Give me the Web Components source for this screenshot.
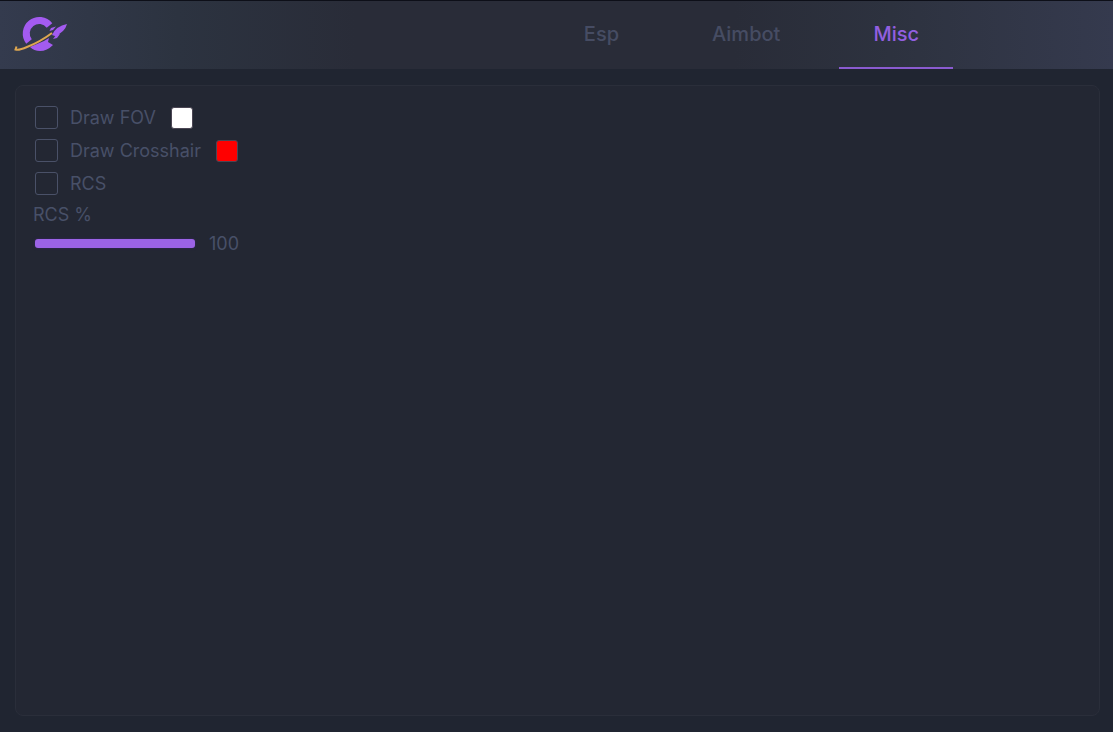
<!DOCTYPE html>
<html lang="en">
<head>
<meta charset="utf-8">
<title>Misc</title>
<style>
  html { height: 100%; }
  body { margin: 0; min-height: 100%; display: flex; background: #202531; color: #485068; font-family: Inter, "Open Sans", sans-serif; }
</style>
</head>
<body>
<app-shell>
  <app-logo slot="logo"></app-logo>
  <nav-tab slot="tabs" href="#esp">Esp</nav-tab>
  <nav-tab slot="tabs" href="#aimbot">Aimbot</nav-tab>
  <nav-tab slot="tabs" href="#misc" active>Misc</nav-tab>
  <option-check label="Draw FOV" color="#ffffff"></option-check>
  <option-check label="Draw Crosshair" color="#ff0000"></option-check>
  <option-check label="RCS"></option-check>
  <option-slider label="RCS %" value="100"></option-slider>
</app-shell>
<script>
class AppShell extends HTMLElement {
  constructor() {
    super();
    this.attachShadow({ mode: "open" }).innerHTML = `
      <style>
        :host { display: flex; flex-direction: column; flex: 1; min-height: 100vh; box-sizing: border-box; border-top: 1px solid #0d0f18; }
        header { display: flex; align-items: center; justify-content: space-between; height: 68px; padding: 0 160px 0 14px; box-sizing: border-box;
          background: linear-gradient(90deg, #343b4e 0%, #2c3340 16%, #292c38 32%, #292c38 66%, #2d323f 80%, #353a4e 100%); }
        nav { display: flex; gap: 25px; height: 100%; }
        main { flex: 1; display: flex; flex-direction: column; align-items: flex-start; margin: 16px 13px 16px 15px; padding: 15px 17px;
          border: 1px solid #2a2e3a; border-radius: 8px; background: #232733; }
      </style>
      <header><slot name="logo"></slot><nav><slot name="tabs"></slot></nav></header>
      <main><slot></slot></main>`;
  }
}
class AppLogo extends HTMLElement {
  constructor() {
    super();
    this.attachShadow({ mode: "open" }).innerHTML = `
      <style>:host { display: block; } svg { display: block; }</style>
      <svg width="56" height="40" viewBox="0 0 56 40" role="img" aria-label="Logo">
        <path d="M35.500 10.500A13 13 0 1 0 15 26.500" fill="none" stroke="#a35bf0" stroke-width="7"/>
        <path d="M16 32L30 26L35 23L34 27L39 30Q33 36 26 36Q20 36 16 32Z" fill="#a35bf0"/>
        <path d="M2.500 31.500L1.500 34.500Q5 35.500 13 32C22 28.500 30 24 38 18" fill="none" stroke="#dda650" stroke-width="2"/>
        <path d="M38 20Q42 11 53 9Q51 17 41 21ZM42 11.500L37 13L35.500 16L39 15ZM46 19L43 23L39 24L42 20Z" fill="#a35bf0"/>
      </svg>`;
  }
}
class NavTab extends HTMLElement {
  connectedCallback() {
    const active = this.hasAttribute("active");
    this.attachShadow({ mode: "open" }).innerHTML = `
      <style>
        :host { display: block; height: 100%; }
        a { display: flex; align-items: center; justify-content: center; height: 100%; padding: 0 34px; box-sizing: border-box;
          border-bottom: 2px solid transparent; font-size: 20px; line-height: 24px; font-weight: 500; color: #464c63; text-decoration: none; }
        a[aria-current] { color: #925fe0; border-bottom-color: #8a5bd0; }
      </style>
      <a href="${this.getAttribute("href")}" ${active ? 'aria-current="page"' : ""}><slot></slot></a>`;
  }
}
class OptionCheck extends HTMLElement {
  connectedCallback() {
    const label = this.getAttribute("label"), color = this.getAttribute("color");
    this.attachShadow({ mode: "open" }).innerHTML = `
      <style>
        :host { display: flex; align-items: center; height: 33px; padding-left: 2px; }
        label { display: flex; align-items: center; gap: 12px; font-size: 18px; line-height: 24px; }
        input { appearance: none; width: 23px; height: 23px; margin: 0; box-sizing: border-box; border: 1px solid #4a5168; border-radius: 3px; }
        input:checked { background: #925fe0; }
        button { width: 22px; height: 22px; margin: 0 0 0 15px; padding: 0; border: 1px solid #4b4654; border-radius: 3px; background: ${color || "none"}; }
      </style>
      <label><input type="checkbox">${label}</label>
      ${color ? `<button type="button" aria-label="${label} color"></button>` : ""}`;
  }
}
class OptionSlider extends HTMLElement {
  connectedCallback() {
    const label = this.getAttribute("label"), value = this.getAttribute("value");
    this.attachShadow({ mode: "open" }).innerHTML = `
      <style>
        :host { display: block; font-size: 18px; line-height: 29px; }
        label { display: block; }
        div { display: flex; align-items: center; gap: 14px; padding-left: 2px; }
        input { appearance: none; width: 160px; height: 9px; margin: 0; border-radius: 3px;
          background: linear-gradient(#9b63e6, #9b63e6) 0 / ${value}% 100% no-repeat #2c3140; box-shadow: 0 0 3px #34275c; }
        input::-webkit-slider-thumb { appearance: none; width: 1px; height: 9px; background: transparent; }
      </style>
      <label for="range">${label}</label>
      <div><input id="range" type="range" min="0" max="100" value="${value}"><output for="range">${value}</output></div>`;
  }
}
customElements.define("app-shell", AppShell);
customElements.define("app-logo", AppLogo);
customElements.define("nav-tab", NavTab);
customElements.define("option-check", OptionCheck);
customElements.define("option-slider", OptionSlider);
</script>
</body>
</html>
